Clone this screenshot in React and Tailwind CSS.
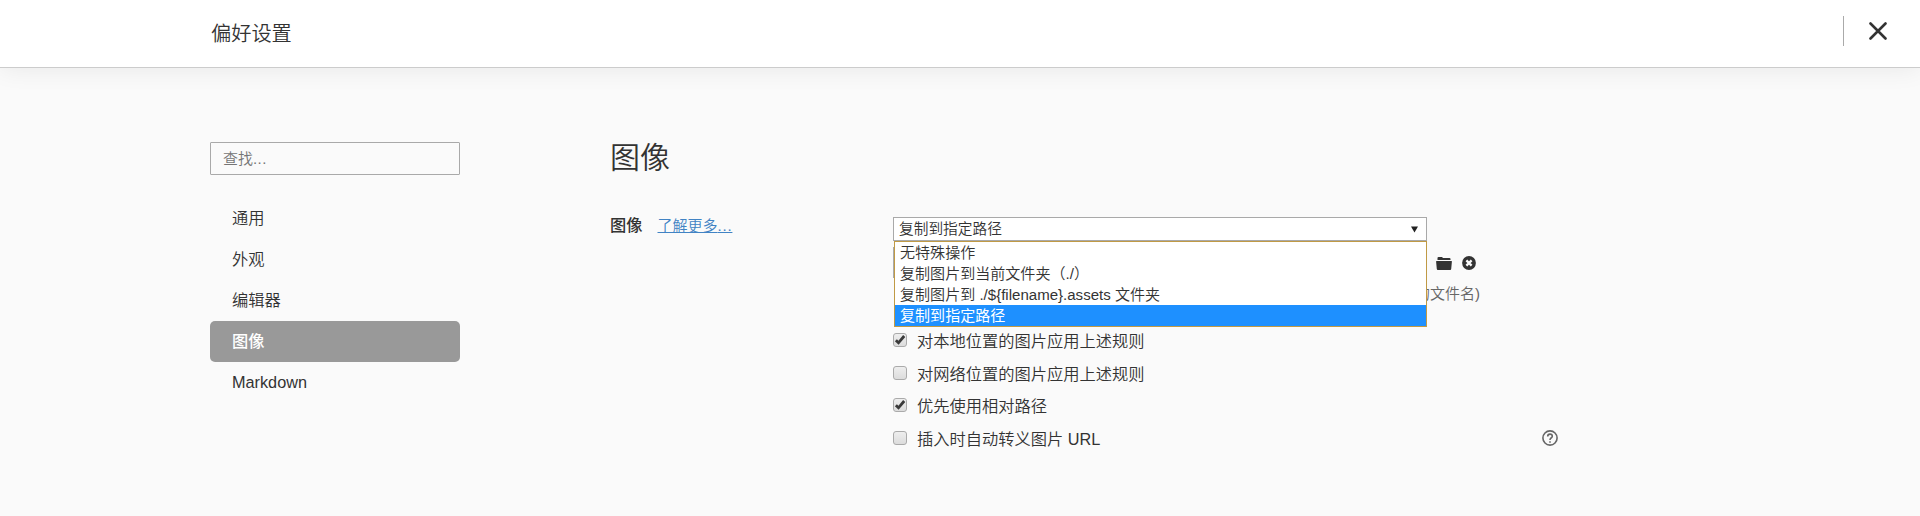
const navItems = ["通用", "外观", "编辑器", "图像", "Markdown"];

const options = [
  "无特殊操作",
  "复制图片到当前文件夹（./）",
  "复制图片到 ./${filename}.assets 文件夹",
  "复制到指定路径",
];

const rules = [
  { label: "对本地位置的图片应用上述规则", checked: true },
  { label: "对网络位置的图片应用上述规则", checked: false },
  { label: "优先使用相对路径", checked: true },
  { label: "插入时自动转义图片 URL", checked: false, help: true },
];

function CheckMark() {
  return (
    <svg viewBox="0 0 14 14" className="block size-3.5 shrink-0" fill="none" stroke="#3a3a3a" strokeWidth="2.8">
      <path d="M2.9 7.2 5.5 9.8 11.2 3" />
    </svg>
  );
}

function Checkbox({ checked }) {
  return (
    <span className="box-border flex size-3.5 shrink-0 items-center justify-center rounded-[3px] border border-[#aaa] bg-linear-to-b from-[#eee] to-[#dcdcdc]">
      {checked && <CheckMark />}
    </span>
  );
}

function Header() {
  return (
    <header className="flex h-[68px] items-center border-b border-[#ccc] bg-white pr-[33px] pl-[211px] shadow-[0_2px_24px_rgba(0,0,0,0.07)]">
      <h1 className="text-[20.2px] leading-[28px] font-[350]">偏好设置</h1>
      <div className="mb-[5px] ml-auto flex items-center">
        <span className="h-[30px] w-px bg-[#aaa]" />
        <svg viewBox="0 0 18 18" className="ml-[25px] size-[18px]" stroke="#333" strokeWidth="2.6" strokeLinecap="round">
          <path d="M1.5 1.5 16.5 16.5M16.5 1.5 1.5 16.5" />
        </svg>
      </div>
    </header>
  );
}

function Sidebar() {
  return (
    <aside className="w-[250px] pt-[74px]">
      <div className="flex h-[33px] items-center rounded-[1px] border border-[#a9a9a9] pt-px pl-[12px] text-[15px] font-[350] text-[#757575]">
        查找<span className="tracking-[0.4px]">...</span>
      </div>
      <nav className="mt-[24px] text-[16.25px]">
        {navItems.map((item) => (
          <div
            key={item}
            className={
              item === "图像"
                ? "flex h-[40.8px] items-center rounded-[5px] bg-[#999] pb-[2px] pl-[22px] font-medium text-white"
                : item === "Markdown"
                  ? "flex h-[40.8px] items-center pl-[22px] font-[350]"
                  : "flex h-[40.8px] items-center pb-[2px] pl-[22px] font-[350]"
            }
          >
            {item}
          </div>
        ))}
      </nav>
    </aside>
  );
}

function PathSelect() {
  return (
    <div className="relative w-[534px]">
      <div className="flex h-6 items-center justify-between border border-[#a9a9a9] bg-white pr-[8px] pl-[5px] text-[14.7px] font-[350]">
        <span className="mt-px">复制到指定路径</span>
        <svg viewBox="0 0 8 7" className="h-[7px] w-[7px]" fill="#222">
          <path d="M0 0H8L4 7Z" />
        </svg>
      </div>
      <ul className="absolute top-6 left-px z-10 h-[86px] w-[533px] border border-[#c09a45] bg-white text-[15.05px] leading-[21px] font-[350]">
        {options.map((option, index) => (
          <li
            key={option}
            className={
              index === 3
                ? "h-[21px] bg-[#1e90ff] pl-[5px] font-normal whitespace-pre text-white"
                : "h-[21px] pl-[5px] whitespace-pre"
            }
          >
            {option}
          </li>
        ))}
      </ul>
    </div>
  );
}

function PathField() {
  return (
    <div className="mt-[6px] flex h-[31px] items-center">
      <div className="h-full w-[534px] border border-[#a9a9a9]" />
      <svg viewBox="0 0 16 13" className="mt-px ml-[8.5px] h-[13px] w-4" fill="#333">
        <path d="M1.5 3V1Q1.5 0 2.5 0H6L7 1H13.5Q14.5 1 14.5 2V3Z" />
        <path d="M.6 4H15.4Q16 4 15.9 4.6L15.2 12Q15.1 13 14.2 13H1.8Q.9 13 .8 12L.1 4.6Q0 4 .6 4Z" />
      </svg>
      <svg viewBox="0 0 14 14" className="mt-px ml-[10px] size-3.5">
        <circle cx="7" cy="7" r="6.9" fill="#333" />
        <path d="M4.4 4.4 9.6 9.6M9.6 4.4 4.4 9.6" stroke="#fafafa" strokeWidth="2.3" />
      </svg>
    </div>
  );
}

function HelpIcon() {
  return (
    <svg viewBox="0 0 16 16" className="mr-[2px] ml-auto size-4" fill="none" stroke="#666" strokeWidth="1.6">
      <circle cx="8" cy="8" r="7.1" />
      <path d="M5.7 6.4Q5.7 4.1 8 4.1 10.3 4.1 10.3 6.2 10.3 7.2 9.1 8 8 8.8 8 10" />
      <path d="M8 11.2V12.7" />
    </svg>
  );
}

function ImageSettings() {
  return (
    <main className="ml-[150px] w-[950px] pt-[70px]">
      <h2 className="text-[30px] leading-[40px] font-[350]">图像</h2>
      <div className="mt-[39px] flex items-start">
        <div className="flex w-[283px] items-baseline leading-4">
          <span className="text-[16.25px] font-medium">图像</span>
          <a className="ml-[15px] text-[15px] font-[350] text-[#4183c4] underline">
            了解更多<span className="tracking-[0.8px]">...</span>
          </a>
        </div>
        <div className="w-[667px]">
          <PathSelect />
          <PathField />
          <p className="mt-[6px] w-[587px] text-right text-[15px] leading-[20px] font-[350] text-[#666]">
            的文件名)
          </p>
          <div className="mt-[20px]">
            {rules.map((rule) => (
              <div key={rule.label} className="flex h-[32.5px] items-center text-[16.25px] font-[350]">
                <Checkbox checked={rule.checked} />
                <span className="mt-[2px] ml-[10px]">{rule.label}</span>
                {rule.help && <HelpIcon />}
              </div>
            ))}
          </div>
        </div>
      </div>
    </main>
  );
}

export default function App() {
  return (
    <div className="h-[516px] w-[1920px] overflow-hidden bg-[#fafafa] font-['Liberation_Sans','Noto_Sans_CJK_SC',sans-serif] text-[#333]">
      <Header />
      <div className="flex pl-[210px]">
        <Sidebar />
        <ImageSettings />
      </div>
    </div>
  );
}
